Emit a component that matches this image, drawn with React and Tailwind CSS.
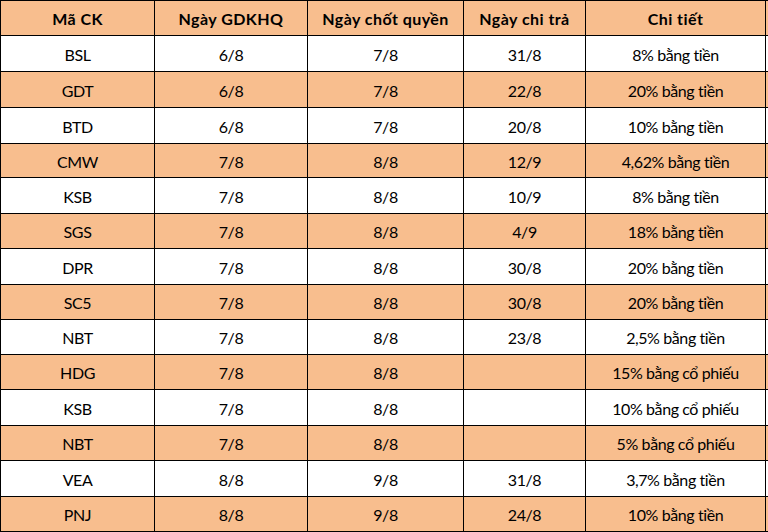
import React from "react";

const rows = [
    { code: "BSL", gdkhq: "6/8", chot: "7/8", tra: "31/8", detail: "8% bằng tiền", h: "h-[36px]" },
    { code: "GDT", gdkhq: "6/8", chot: "7/8", tra: "22/8", detail: "20% bằng tiền", h: "h-[36px]" },
    { code: "BTD", gdkhq: "6/8", chot: "7/8", tra: "20/8", detail: "10% bằng tiền", h: "h-[36px]" },
    { code: "CMW", gdkhq: "7/8", chot: "8/8", tra: "12/9", detail: "4,62% bằng tiền", h: "h-[34px]" },
    { code: "KSB", gdkhq: "7/8", chot: "8/8", tra: "10/9", detail: "8% bằng tiền", h: "h-[36px]" },
    { code: "SGS", gdkhq: "7/8", chot: "8/8", tra: "4/9", detail: "18% bằng tiền", h: "h-[35px]" },
    { code: "DPR", gdkhq: "7/8", chot: "8/8", tra: "30/8", detail: "20% bằng tiền", h: "h-[36px]" },
    { code: "SC5", gdkhq: "7/8", chot: "8/8", tra: "30/8", detail: "20% bằng tiền", h: "h-[35px]" },
    { code: "NBT", gdkhq: "7/8", chot: "8/8", tra: "23/8", detail: "2,5% bằng tiền", h: "h-[35px]" },
    { code: "HDG", gdkhq: "7/8", chot: "8/8", tra: "", detail: "15% bằng cổ phiếu", h: "h-[35px]" },
    { code: "KSB", gdkhq: "7/8", chot: "8/8", tra: "", detail: "10% bằng cổ phiếu", h: "h-[36px]" },
    { code: "NBT", gdkhq: "7/8", chot: "8/8", tra: "", detail: "5% bằng cổ phiếu", h: "h-[35px]" },
    { code: "VEA", gdkhq: "8/8", chot: "9/8", tra: "31/8", detail: "3,7% bằng tiền", h: "h-[36px]" },
    { code: "PNJ", gdkhq: "8/8", chot: "9/8", tra: "24/8", detail: "10% bằng tiền", h: "h-[35px]" },
];

const cols = "grid grid-cols-[154px_153px_156px_122px_181px]";
const cell = "flex items-center justify-center border-l border-black pt-[2px]";

const App = () => {
    return (
        <div className="w-[768px] h-[532px] bg-white overflow-hidden font-['Lato','Liberation_Sans',sans-serif] text-[16px] text-black leading-none">
            {/* header */}
            <div className={`${cols} h-[36px] border-t border-b border-black bg-[#F8BE8E] font-bold tracking-[0.45px]`}>
                <div className={cell}>Mã CK</div>
                <div className={cell}>Ngày GDKHQ</div>
                <div className={cell}>Ngày chốt quyền</div>
                <div className={cell}>Ngày chi trả</div>
                <div className={`${cell} border-r`}>Chi tiết</div>
            </div>

            {rows.map((r, i) => (
                <div
                    key={i}
                    className={`${cols} ${r.h} border-b border-black tracking-[-0.4px] ${i % 2 === 1 ? "bg-[#F8BE8E]" : "bg-white"}`}
                >
                    <div className={cell}>{r.code}</div>
                    <div className={cell}>{r.gdkhq}</div>
                    <div className={cell}>{r.chot}</div>
                    <div className={cell}>{r.tra}</div>
                    <div className={`${cell} border-r`}>{r.detail}</div>
                </div>
            ))}
        </div>
    );
};

export default App;
